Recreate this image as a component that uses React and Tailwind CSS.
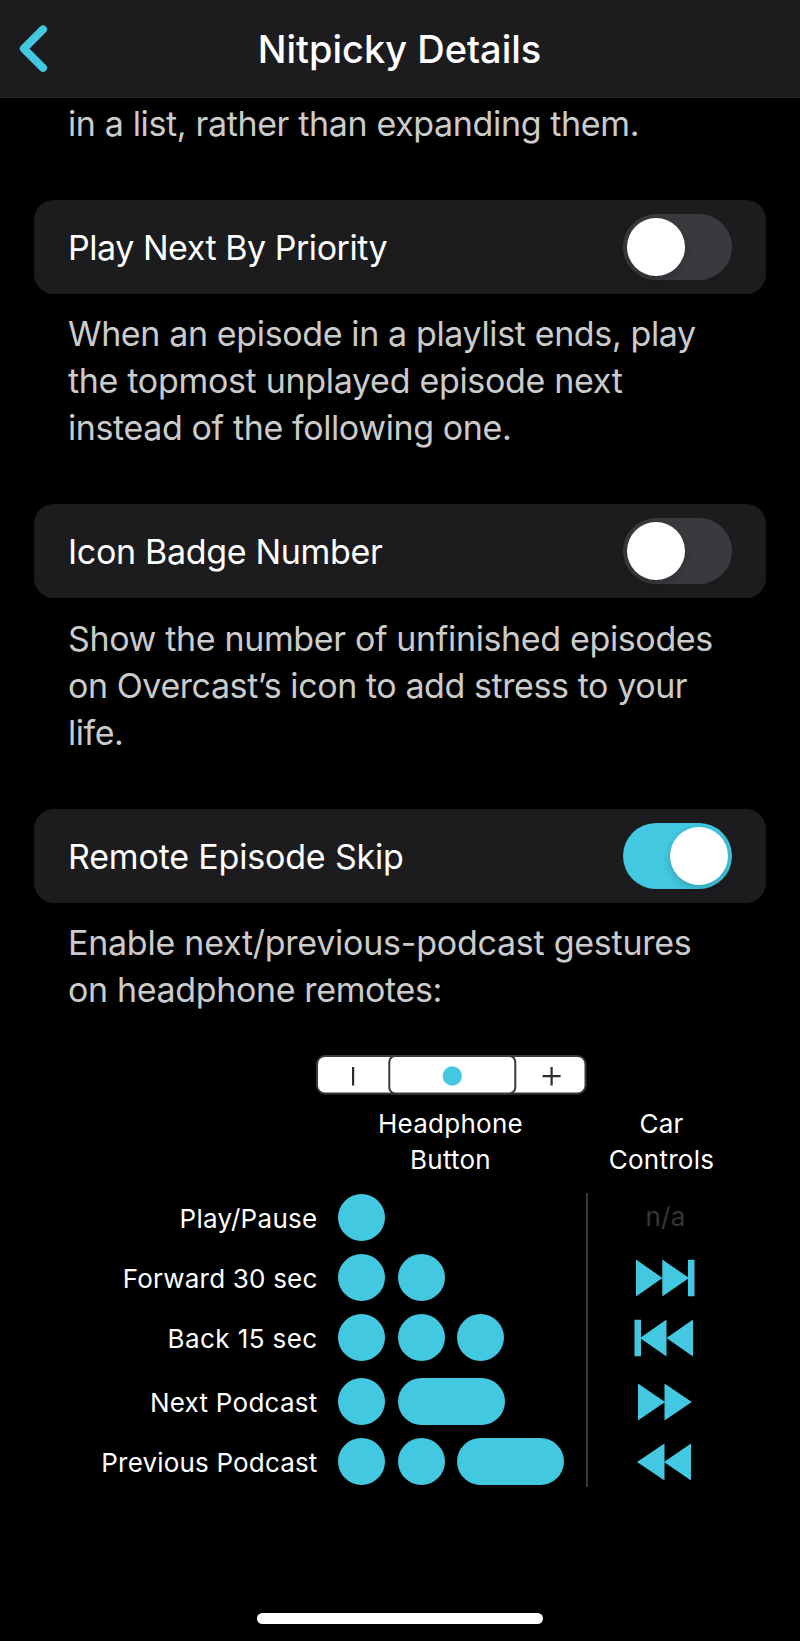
import React from "react";

function Toggle({ on }) {
  return (
    <div
      role="switch"
      aria-checked={on}
      className={
        on
          ? "flex h-[66px] w-[109px] items-center justify-end rounded-full bg-[#42c8e0] p-1 pr-[4px]"
          : "flex h-[66px] w-[109px] items-center justify-start rounded-full bg-[#3a393e] p-1"
      }
    >
      <div className="size-[58px] rounded-full bg-white shadow-[0_3px_8px_rgba(0,0,0,0.2)]" />
    </div>
  );
}

function SettingCard({ label, tracking, on, className }) {
  return (
    <div
      className={`ml-[34px] mr-[34.500px] flex h-[93.500px] items-center justify-between rounded-[20px] bg-[#1c1c1e] pl-[34px] pr-[33.500px] ${className}`}
    >
      <span className={`mt-px whitespace-nowrap text-[34px] leading-[47px] text-white ${tracking}`}>{label}</span>
      <Toggle on={on} />
    </div>
  );
}

function Description({ lines, className }) {
  return (
    <p className={`px-[68px] text-[34px] leading-[47px] text-[#cbcbcb] ${className}`}>
      {lines.map(([text, tracking]) => (
        <span key={text} className={`block whitespace-nowrap ${tracking}`}>
          {text}
        </span>
      ))}
    </p>
  );
}

function Remote() {
  return (
    <svg width="272" height="42" viewBox="0 0 272 42" className="block">
      <rect x="1" y="2" width="268.500" height="37.5" rx="8" fill="#fff" stroke="#39393b" strokeWidth="2" />
      <rect x="73.300" y="2" width="126" height="37.500" rx="6" fill="#fff" stroke="#39393b" strokeWidth="2" />
      <circle cx="136.300" cy="22" r="9.700" fill="#42c8e0" />
      <path d="M37.100 13v18.500M226.600 22.200h18M235.600 13v18.500" stroke="#2c2c2e" strokeWidth="2.200" fill="none" />
    </svg>
  );
}

const icons = {
  next: "M5 2.500L31.500 21L5 39.500ZM31.300 2.500L58 21L31.300 39.500ZM57 2.800H63.500V39.200H57Z",
  previous: "M3.500 2.800H10V39.200H3.500ZM35.500 2.500V39.500L9 21ZM62 2.500V39.500L35.500 21Z",
  forward: "M7 2.500L34 21L7 39.500ZM33.500 2.500L60.800 21L33.500 39.500Z",
  rewind: "M33.500 2.500V39.500L6 21ZM60 2.500V39.500L33 21Z",
};

const rows = [
  { label: "Play/Pause", tracking: "tracking-[0.28px]", gap: "", presses: ["tap"] },
  { label: "Forward 30 sec", tracking: "tracking-[0.2px]", gap: "mt-[13px]", presses: ["tap", "tap"], icon: "next" },
  { label: "Back 15 sec", tracking: "tracking-[0.4px]", gap: "mt-[13px]", presses: ["tap", "tap", "tap"], icon: "previous" },
  { label: "Next Podcast", tracking: "tracking-[0.25px]", gap: "mt-[17px]", presses: ["tap", "hold"], icon: "forward" },
  { label: "Previous Podcast", tracking: "tracking-[0.17px]", gap: "mt-[13px]", presses: ["tap", "tap", "hold"], icon: "rewind" },
];

export default function App() {
  return (
    <div className="flex h-[1641px] w-[800px] flex-col overflow-hidden bg-black font-['Inter',sans-serif]">
      <header className="grid h-[98px] shrink-0 grid-cols-[100px_1fr_100px] items-center border-b border-[#262628] bg-[#1c1c1e]">
        <svg width="60" height="60" viewBox="0 0 60 60" className="block">
          <path
            d="M43 10.400L23.800 29.600L43 48.800"
            fill="none"
            stroke="#42c8e0"
            strokeWidth="8"
            strokeLinecap="round"
            strokeLinejoin="round"
          />
        </svg>
        <h1 className="whitespace-nowrap pr-px text-center text-[38px] font-medium leading-[48px] text-white">
          Nitpicky Details
        </h1>
      </header>

      <main className="flex flex-col">
        <Description className="mt-[2px]" lines={[["in a list, rather than expanding them.", "tracking-[-0.36px]"]]} />

        <SettingCard className="mt-[53px]" label="Play Next By Priority" tracking="tracking-[-0.46px]" on={false} />
        <Description
          className="mt-[16.5px]"
          lines={[
            ["When an episode in a playlist ends, play", "tracking-[-0.37px]"],
            ["the topmost unplayed episode next", "tracking-[-0.31px]"],
            ["instead of the following one.", "tracking-[-0.39px]"],
          ]}
        />

        <SettingCard className="mt-[53px]" label="Icon Badge Number" tracking="tracking-[-0.32px]" on={false} />
        <Description
          className="mt-[17px]"
          lines={[
            ["Show the number of unfinished episodes", "tracking-[-0.36px]"],
            ["on Overcast’s icon to add stress to your", "tracking-[-0.42px]"],
            ["life.", "tracking-[-0.45px]"],
          ]}
        />

        <SettingCard className="mt-[53.5px]" label="Remote Episode Skip" tracking="tracking-[-0.18px]" on={true} />
        <Description
          className="mt-[16.5px]"
          lines={[
            ["Enable next/previous-podcast gestures", "tracking-[-0.25px]"],
            ["on headphone remotes:", "tracking-[-0.36px]"],
          ]}
        />

        <section className="mt-[41px] flex text-[26px] leading-[36px] text-white">
          <div className="flex w-[586px] flex-col">
            <div className="flex flex-col items-end">
              <div className="-mr-[2px]">
                <Remote />
              </div>
              <div className="mt-[10px] w-[271px] text-center tracking-[0.25px]">
                Headphone
                <br />
                Button
              </div>
            </div>
            <div className="mt-[16px] flex flex-col">
              {rows.map((row) => (
                <div key={row.label} className={`flex h-[47px] items-center ${row.gap}`}>
                  <span className={`w-[317.500px] pt-[2px] text-right whitespace-nowrap ${row.tracking}`}>{row.label}</span>
                  <div className="ml-[20.500px] flex gap-[12.700px]">
                    {row.presses.map((press, j) => (
                      <div
                        key={j}
                        className={
                          press === "tap"
                            ? "h-[47px] w-[47px] rounded-full bg-[#42c8e0]"
                            : "h-[47px] w-[107px] rounded-full bg-[#42c8e0]"
                        }
                      />
                    ))}
                  </div>
                </div>
              ))}
            </div>
          </div>

          <div className="flex flex-col pt-[52px]">
            <div className="w-[151px] text-center tracking-[0.25px]">
              Car
              <br />
              Controls
            </div>
            <div className="mt-[15px] flex h-[294px] w-[152px] flex-col border-l-2 border-[#38383a] pt-px">
              {rows.map((row) => (
                <div key={row.label} className={`flex h-[47px] items-center ${row.gap}`}>
                  {row.icon ? (
                    <svg width="70" height="42" viewBox="0 0 70 42" className="ml-[43px] block">
                      <path d={icons[row.icon]} fill="#42c8e0" />
                    </svg>
                  ) : (
                    <span className="-mt-[2px] ml-[57.500px] tracking-[0.25px] text-[#363638]">n/a</span>
                  )}
                </div>
              ))}
            </div>
          </div>
        </section>
      </main>

      <div className="mb-[17px] mt-auto h-[11px] w-[286px] self-center rounded-full bg-white" />
    </div>
  );
}
